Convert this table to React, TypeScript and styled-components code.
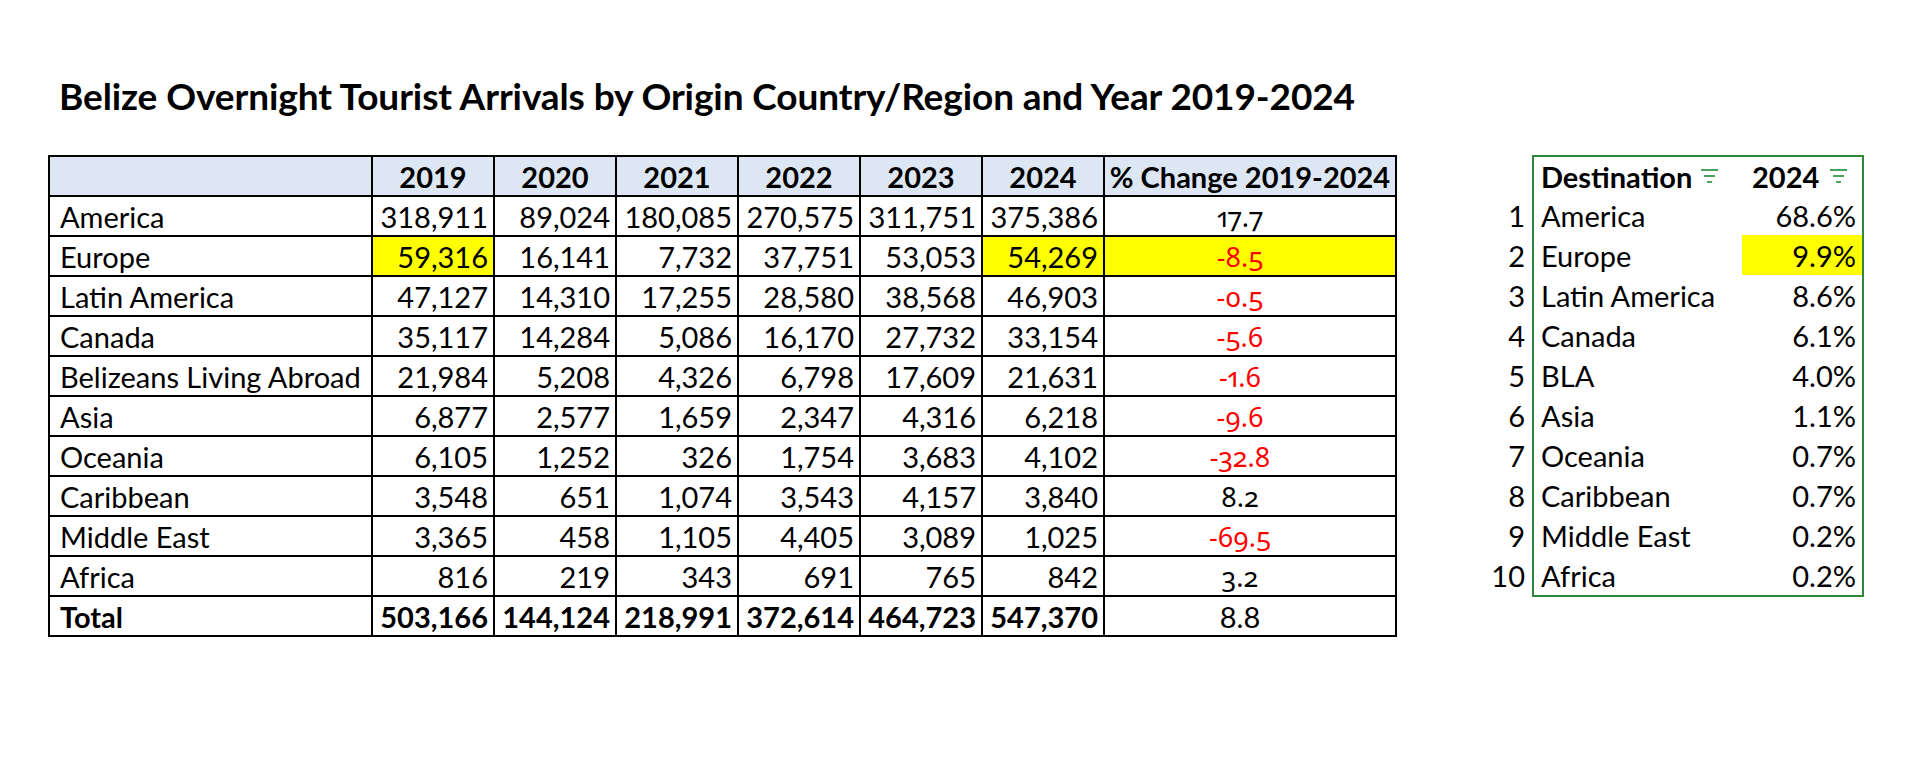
import React from "react";
import styled, { createGlobalStyle } from "styled-components";

const GlobalStyle = createGlobalStyle`
  html, body {
    margin: 0;
    padding: 0;
    background: #ffffff;
  }
  body {
    font-family: Lato, "Open Sans", "Liberation Sans", sans-serif;
    color: #000000;
  }
`;

const Page = styled.div`
  width: 1922px;
  height: 776px;
  box-sizing: border-box;
  padding: 74px 0 0 48px;
  background: #ffffff;
`;

const Title = styled.h1`
  margin: 0 0 0 11px;
  height: 44px;
  line-height: 44px;
  font-family: Lato, "Liberation Sans", sans-serif;
  font-weight: 700;
  font-size: 37px;
  letter-spacing: -0.1px;
  white-space: nowrap;
`;

const Content = styled.div`
  display: flex;
  align-items: flex-start;
  margin-top: 37px;
`;

const DataGrid = styled.div`
  display: grid;
  grid-template-columns: 321px repeat(6, 120px) 290px;
  grid-auto-rows: 38px;
  gap: 2px;
  background: #000000;
  border: 2px solid #000000;
`;

type CellProps = {
  $bg?: "head" | "yellow" | "plain";
  $align?: "left" | "right" | "center";
  $bold?: boolean;
  $red?: boolean;
  $old?: boolean;
};

const Cell = styled.div<CellProps>`
  display: flex;
  align-items: center;
  justify-content: ${(p) =>
    p.$align === "left" ? "flex-start" : p.$align === "center" ? "center" : "flex-end"};
  padding: ${(p) =>
    p.$align === "left" ? "0 0 0 10px" : p.$align === "center" ? "0 20px 0 0" : "0 5px 0 0"};
  background: ${(p) =>
    p.$bg === "head" ? "#dde7f3" : p.$bg === "yellow" ? "#ffff00" : "#ffffff"};
  font-family: ${(p) => (p.$old ? '"Noto Sans", Lato, sans-serif' : 'Lato, "Open Sans", sans-serif')};
  font-size: ${(p) => (p.$old ? "27px" : "29px")};
  font-weight: ${(p) => (p.$bold ? 700 : 400)};
  color: ${(p) => (p.$red ? "#ff0000" : "#000000")};
  font-feature-settings: ${(p) => (p.$old ? '"onum" 1, "pnum" 1' : '"lnum" 1')};
  white-space: nowrap;
  overflow: hidden;
`;

const HeadCell = styled(Cell)`
  padding: 0;
`;

const Side = styled.div`
  display: flex;
  margin-left: 85px;
`;

const RankCol = styled.div`
  display: grid;
  grid-template-rows: 40px repeat(10, 40px);
  width: 50px;
`;

const Rank = styled.div`
  display: flex;
  align-items: center;
  justify-content: flex-end;
  padding: 0 7px 0 0;
  font-size: 29px;
`;

const SideTable = styled.div`
  display: grid;
  grid-template-columns: 208px 120px;
  grid-template-rows: 38px repeat(10, 40px);
  border: 2px solid #2e8a3a;
`;

const SideHead = styled.div<{ $first?: boolean }>`
  display: flex;
  align-items: center;
  justify-content: space-between;
  padding: ${(p) => (p.$first ? "0 24px 0 7px" : "0 15px 0 10px")};
  font-size: 29px;
  font-weight: 700;
`;

const SideCell = styled.div<{ $right?: boolean; $yellow?: boolean }>`
  display: flex;
  align-items: center;
  justify-content: ${(p) => (p.$right ? "flex-end" : "flex-start")};
  padding: ${(p) => (p.$right ? "0 6px 0 0" : "0 0 0 7px")};
  background: ${(p) => (p.$yellow ? "#ffff00" : "transparent")};
  font-size: 29px;
  white-space: nowrap;
`;

const FilterIcon = () => (
  <svg width="17" height="14" viewBox="0 0 17 14" aria-hidden="true">
    <g stroke="#1f8a35" strokeWidth="1.6">
      <line x1="0" y1="1" x2="17" y2="1" />
      <line x1="3" y1="7" x2="14" y2="7" />
      <line x1="6" y1="13" x2="11" y2="13" />
    </g>
  </svg>
);

type Row = { name: string; vals: string[]; pct: string; hl?: boolean[] };

const rows: Row[] = [
  { name: "America", vals: ["318,911", "89,024", "180,085", "270,575", "311,751", "375,386"], pct: "17.7" },
  {
    name: "Europe",
    vals: ["59,316", "16,141", "7,732", "37,751", "53,053", "54,269"],
    pct: "-8.5",
    hl: [true, false, false, false, false, true, true],
  },
  { name: "Latin America", vals: ["47,127", "14,310", "17,255", "28,580", "38,568", "46,903"], pct: "-0.5" },
  { name: "Canada", vals: ["35,117", "14,284", "5,086", "16,170", "27,732", "33,154"], pct: "-5.6" },
  { name: "Belizeans Living Abroad", vals: ["21,984", "5,208", "4,326", "6,798", "17,609", "21,631"], pct: "-1.6" },
  { name: "Asia", vals: ["6,877", "2,577", "1,659", "2,347", "4,316", "6,218"], pct: "-9.6" },
  { name: "Oceania", vals: ["6,105", "1,252", "326", "1,754", "3,683", "4,102"], pct: "-32.8" },
  { name: "Caribbean", vals: ["3,548", "651", "1,074", "3,543", "4,157", "3,840"], pct: "8.2" },
  { name: "Middle East", vals: ["3,365", "458", "1,105", "4,405", "3,089", "1,025"], pct: "-69.5" },
  { name: "Africa", vals: ["816", "219", "343", "691", "765", "842"], pct: "3.2" },
];

const years = ["2019", "2020", "2021", "2022", "2023", "2024"];
const totals = ["503,166", "144,124", "218,991", "372,614", "464,723", "547,370"];

const shares: [string, string][] = [
  ["America", "68.6%"],
  ["Europe", "9.9%"],
  ["Latin America", "8.6%"],
  ["Canada", "6.1%"],
  ["BLA", "4.0%"],
  ["Asia", "1.1%"],
  ["Oceania", "0.7%"],
  ["Caribbean", "0.7%"],
  ["Middle East", "0.2%"],
  ["Africa", "0.2%"],
];

export default function App() {
  return (
    <>
      <GlobalStyle />
      <Page>
        <Title>Belize Overnight Tourist Arrivals by Origin Country/Region and Year 2019-2024</Title>
        <Content>
          <DataGrid>
            <HeadCell $bg="head" />
            {years.map((y) => (
              <HeadCell key={y} $bg="head" $align="center" $bold>
                {y}
              </HeadCell>
            ))}
            <HeadCell $bg="head" $align="center" $bold>
              % Change 2019-2024
            </HeadCell>
            {rows.map((r) => (
              <React.Fragment key={r.name}>
                <Cell $align="left">{r.name}</Cell>
                {r.vals.map((v, i) => (
                  <Cell key={i} $align="right" $bg={r.hl && r.hl[i] ? "yellow" : "plain"}>
                    {v}
                  </Cell>
                ))}
                <Cell
                  $align="center"
                  $old
                  $red={r.pct.startsWith("-")}
                  $bg={r.hl && r.hl[6] ? "yellow" : "plain"}
                >
                  {r.pct}
                </Cell>
              </React.Fragment>
            ))}
            <Cell $align="left" $bold>
              Total
            </Cell>
            {totals.map((t) => (
              <Cell key={t} $align="right" $bold>
                {t}
              </Cell>
            ))}
            <Cell $align="center">8.8</Cell>
          </DataGrid>
          <Side>
            <RankCol>
              <Rank />
              {shares.map((_, i) => (
                <Rank key={i}>{i + 1}</Rank>
              ))}
            </RankCol>
            <SideTable>
              <SideHead $first>
                <span>Destination</span>
                <FilterIcon />
              </SideHead>
              <SideHead>
                <span>2024</span>
                <FilterIcon />
              </SideHead>
              {shares.map(([n, v], i) => (
                <React.Fragment key={n}>
                  <SideCell>{n}</SideCell>
                  <SideCell $right $yellow={i === 1}>
                    {v}
                  </SideCell>
                </React.Fragment>
              ))}
            </SideTable>
          </Side>
        </Content>
      </Page>
    </>
  );
}
